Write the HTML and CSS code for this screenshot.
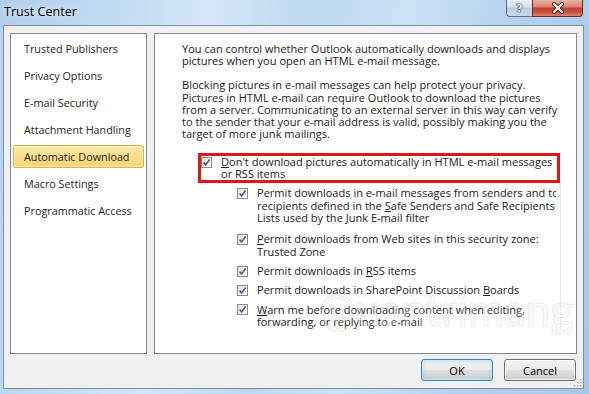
FILE: index.html
```html
<!DOCTYPE html>
<html>
<head>
<meta charset="utf-8">
<title>Trust Center</title>
<link rel="stylesheet" href="styles.css">
</head>
<body>
<div class="window">
  <div class="titlebar">
    <div class="title">Trust Center</div>
    <div class="caption-btns">
      <div class="cap help"><span class="help-glyph">?</span></div>
      <div class="cap close">
        <svg class="close-x" width="14" height="12" viewBox="0 0 14 12">
          <path d="M3 2 L11 10 M11 2 L3 10" stroke="#4a1c16" stroke-width="4" stroke-linecap="round"/>
          <path d="M3 2 L11 10 M11 2 L3 10" stroke="#ffffff" stroke-width="2.2" stroke-linecap="round"/>
        </svg>
      </div>
    </div>
  </div>
  <div class="client">
    <div class="panels">
      <ul class="nav">
        <li class="nav-item"><span class="nav-label">Trusted Publishers</span></li>
        <li class="nav-item"><span class="nav-label">Privacy Options</span></li>
        <li class="nav-item"><span class="nav-label">E-mail Security</span></li>
        <li class="nav-item"><span class="nav-label">Attachment Handling</span></li>
        <li class="nav-item selected"><span class="nav-label">Automatic Download</span></li>
        <li class="nav-item"><span class="nav-label">Macro Settings</span></li>
        <li class="nav-item"><span class="nav-label">Programmatic Access</span></li>
      </ul>
      <div class="content">
        <p class="para">You can control whether Outlook automatically downloads and displays<br>pictures when you open an HTML e-mail message.</p>
        <p class="para p2">Blocking pictures in e-mail messages can help protect your privacy.<br>Pictures in HTML e-mail can require Outlook to download the pictures<br>from a server. Communicating to an external server in this way can verify<br>to the sender that your e-mail address is valid, possibly making you the<br>target of more junk mailings.</p>
        <div class="highlight">
          <div class="opt">
            <svg class="cb" width="11" height="11" viewBox="0 0 11 11"><defs><linearGradient id="g1" x1="0" y1="0" x2="1" y2="1"><stop offset="0" stop-color="#dedede"/><stop offset="1" stop-color="#fbfbfb"/></linearGradient></defs><rect x="0.5" y="0.5" width="10" height="10" fill="url(#g1)" stroke="#8c8c8c"/><path d="M2.6 5.4 L4.6 7.9 L8.6 2.6" fill="none" stroke="#47598f" stroke-width="1.6"/></svg>
            <span class="label"><u>D</u>on't download pictures automatically in HTML e-mail messages<br>or RSS items</span>
          </div>
        </div>
        <div class="suboptions">
          <div class="subclip">
            <div class="opt sub first">
              <svg class="cb" width="11" height="11" viewBox="0 0 11 11"><rect x="0.5" y="0.5" width="10" height="10" fill="url(#g1)" stroke="#8c8c8c"/><path d="M2.6 5.4 L4.6 7.9 L8.6 2.6" fill="none" stroke="#47598f" stroke-width="1.6"/></svg>
              <span class="label">Permit downloads in e-mail messages from senders and to<br>recipients defined in the <u>S</u>afe Senders and Safe Recipients<br>Lists used by the Junk E-mail filter</span>
            </div>
            <div class="opt sub">
              <svg class="cb" width="11" height="11" viewBox="0 0 11 11"><rect x="0.5" y="0.5" width="10" height="10" fill="url(#g1)" stroke="#8c8c8c"/><path d="M2.6 5.4 L4.6 7.9 L8.6 2.6" fill="none" stroke="#47598f" stroke-width="1.6"/></svg>
              <span class="label"><u>P</u>ermit downloads from Web sites in this security zone:<br>Trusted Zone</span>
            </div>
            <div class="opt sub">
              <svg class="cb" width="11" height="11" viewBox="0 0 11 11"><rect x="0.5" y="0.5" width="10" height="10" fill="url(#g1)" stroke="#8c8c8c"/><path d="M2.6 5.4 L4.6 7.9 L8.6 2.6" fill="none" stroke="#47598f" stroke-width="1.6"/></svg>
              <span class="label">Permit downloads in <u>R</u>SS items</span>
            </div>
            <div class="opt sub">
              <svg class="cb" width="11" height="11" viewBox="0 0 11 11"><rect x="0.5" y="0.5" width="10" height="10" fill="url(#g1)" stroke="#8c8c8c"/><path d="M2.6 5.4 L4.6 7.9 L8.6 2.6" fill="none" stroke="#47598f" stroke-width="1.6"/></svg>
              <span class="label">Permit downloads in SharePoint Discussion <u>B</u>oards</span>
            </div>
            <div class="opt sub last">
              <svg class="cb" width="11" height="11" viewBox="0 0 11 11"><rect x="0.5" y="0.5" width="10" height="10" fill="url(#g1)" stroke="#8c8c8c"/><path d="M2.6 5.4 L4.6 7.9 L8.6 2.6" fill="none" stroke="#47598f" stroke-width="1.6"/></svg>
              <span class="label"><u>W</u>arn me before downloading content when editing,<br>forwarding, or replying to e-mail</span>
            </div>
          </div>
        </div>
        <div class="watermark">@uantrimang</div>
      </div>
    </div>
    <div class="footer">
      <button class="btn ok">OK</button>
      <button class="btn">Cancel</button>
    </div>
    <svg class="grip" width="9" height="9" viewBox="0 0 9 9">
      <rect x="7" y="1" width="1.3" height="1.3" fill="#a0a0a0"/>
      <rect x="4" y="4" width="1.3" height="1.3" fill="#a0a0a0"/>
      <rect x="7" y="4" width="1.3" height="1.3" fill="#a0a0a0"/>
      <rect x="1" y="7" width="1.3" height="1.3" fill="#a0a0a0"/>
      <rect x="4" y="7" width="1.3" height="1.3" fill="#a0a0a0"/>
      <rect x="7" y="7" width="1.3" height="1.3" fill="#a0a0a0"/>
    </svg>
  </div>
</div>
</body>
</html>
```
FILE: styles.css
```css
* { box-sizing: border-box; }
html, body { margin: 0; padding: 0; }
body {
  width: 589px;
  height: 394px;
  overflow: hidden;
  font-family: "Open Sans", "Noto Sans", sans-serif;
  font-size: 10.8px;
  color: #1b1b1b;
  background: linear-gradient(100deg, #b3d0ec 0%, #c1dbf2 18%, #d4e7f8 32%, #bdd8f0 48%, #cbe2f5 62%, #b4d1ed 80%, #a8c8e7 100%);
}
.window {
  display: flex;
  flex-direction: column;
  height: 394px;
}
.titlebar {
  height: 25px;
  display: flex;
  justify-content: space-between;
  align-items: flex-start;
  padding-left: 4px;
  padding-right: 6px;
}
.title {
  font-size: 12.6px;
  line-height: 24px;
  color: #000;
  text-shadow: 0 0 5px rgba(255,255,255,0.9);
}
.caption-btns { display: flex; }
.cap {
  height: 17px;
  display: flex;
  align-items: center;
  justify-content: center;
  border: 1px solid #5d6e83;
  border-top: none;
}
.help {
  width: 26px;
  border-right: none;
  border-radius: 0 0 0 4px;
  background: linear-gradient(#e9f0f7 0%, #d6e1ec 45%, #bccbdc 50%, #cbd9e7 100%);
}
.help-glyph {
  font-family: "DejaVu Sans", sans-serif;
  font-weight: bold;
  font-size: 11px;
  line-height: 15px;
  color: #f4f7fa;
  text-shadow: 0 0 1px #2c3a4a, 0 0 1px #2c3a4a, 0 0 2px #2c3a4a;
}
.close {
  width: 51px;
  border-color: #6b2a22;
  border-radius: 0 0 4px 0;
  background: linear-gradient(#eab0a3 0%, #d98a7a 40%, #c4432f 52%, #c9503c 75%, #e0876f 100%);
}
.close-x { display: block; }
.client {
  position: relative;
  margin: 0 5px 0 3px;
  height: 364px;
  border: 1px solid #7f8fa2;
  background: #f0f0f0;
  padding: 7px 6px 7px 6px;
  display: flex;
  flex-direction: column;
}
.panels {
  display: flex;
  gap: 7px;
  height: 321px;
}
.nav {
  width: 137px;
  flex: none;
  margin: 0;
  padding: 1px 0 0 0;
  list-style: none;
  background: #fff;
  border: 1px solid #828790;
}
.nav-item {
  height: 27px;
  padding: 2px;
}
.nav-label {
  display: block;
  height: 23px;
  line-height: 21px;
  padding-left: 10px;
  border: 1px solid transparent;
  border-radius: 2px;
  white-space: nowrap;
  color: #1e1e1e;
}
.nav-item.selected .nav-label {
  background: linear-gradient(#fde9a6 0%, #fbdc88 60%, #f9d475 100%);
  border-color: #e2b04a;
  box-shadow: inset 0 0 0 1px rgba(255,246,214,0.6);
}
.content {
  flex: 1;
  position: relative;
  background: #fff;
  border: 1px solid #828790;
  padding: 9px 10px 0 27px;
  overflow: hidden;
  font-size: 11.05px;
}
.para {
  margin: 0;
  line-height: 12.2px;
  white-space: nowrap;
}
.p2 { margin-top: 12px; }
.highlight {
  margin: 13px 0 0 16px;
  width: 362px;
  border: 3px solid #e3131b;
  line-height: 12px;
  white-space: nowrap;
}
.opt {
  display: flex;
  align-items: flex-start;
  gap: 9px;
}
.cb {
  flex: none;
  display: block;
  margin-top: 0.6px;
}
.suboptions {
  margin-left: 55px;
  width: 324px;
  border-right: 1px solid #e8e8e8;
  padding-top: 4px;
  line-height: 12.3px;
}
.subclip {
  width: 319px;
  overflow: hidden;
  white-space: nowrap;
}
.sub { margin-bottom: 7px; }
.sub.first { margin-bottom: 9px; }
.sub.last { margin-bottom: 2px; }
.watermark {
  position: absolute;
  left: 163px;
  top: 250px;
  font-family: "Lato", sans-serif;
  font-size: 44px;
  line-height: 50px;
  color: rgba(255,255,255,0.3);
  -webkit-text-stroke: 1px rgba(160,160,160,0.26);
  pointer-events: none;
  white-space: nowrap;
}
.footer {
  display: flex;
  justify-content: flex-end;
  gap: 11px;
  margin-top: 5px;
  padding-right: 1px;
}
.btn {
  width: 72px;
  height: 22px;
  padding: 0;
  font-family: inherit;
  font-size: 11px;
  color: #000;
  border: 1px solid #707070;
  border-radius: 3px;
  background: linear-gradient(#f2f2f2 0%, #ebebeb 48%, #dddddd 52%, #cfcfcf 100%);
  box-shadow: inset 0 0 0 1px rgba(255,255,255,0.75);
}
.btn.ok {
  border-color: #3c7fb1;
  box-shadow: inset 0 0 0 1px #c9ecfd, inset 0 0 3px 1px rgba(72,180,240,0.45);
}
.grip {
  position: absolute;
  right: 1px;
  bottom: 1px;
}
```
